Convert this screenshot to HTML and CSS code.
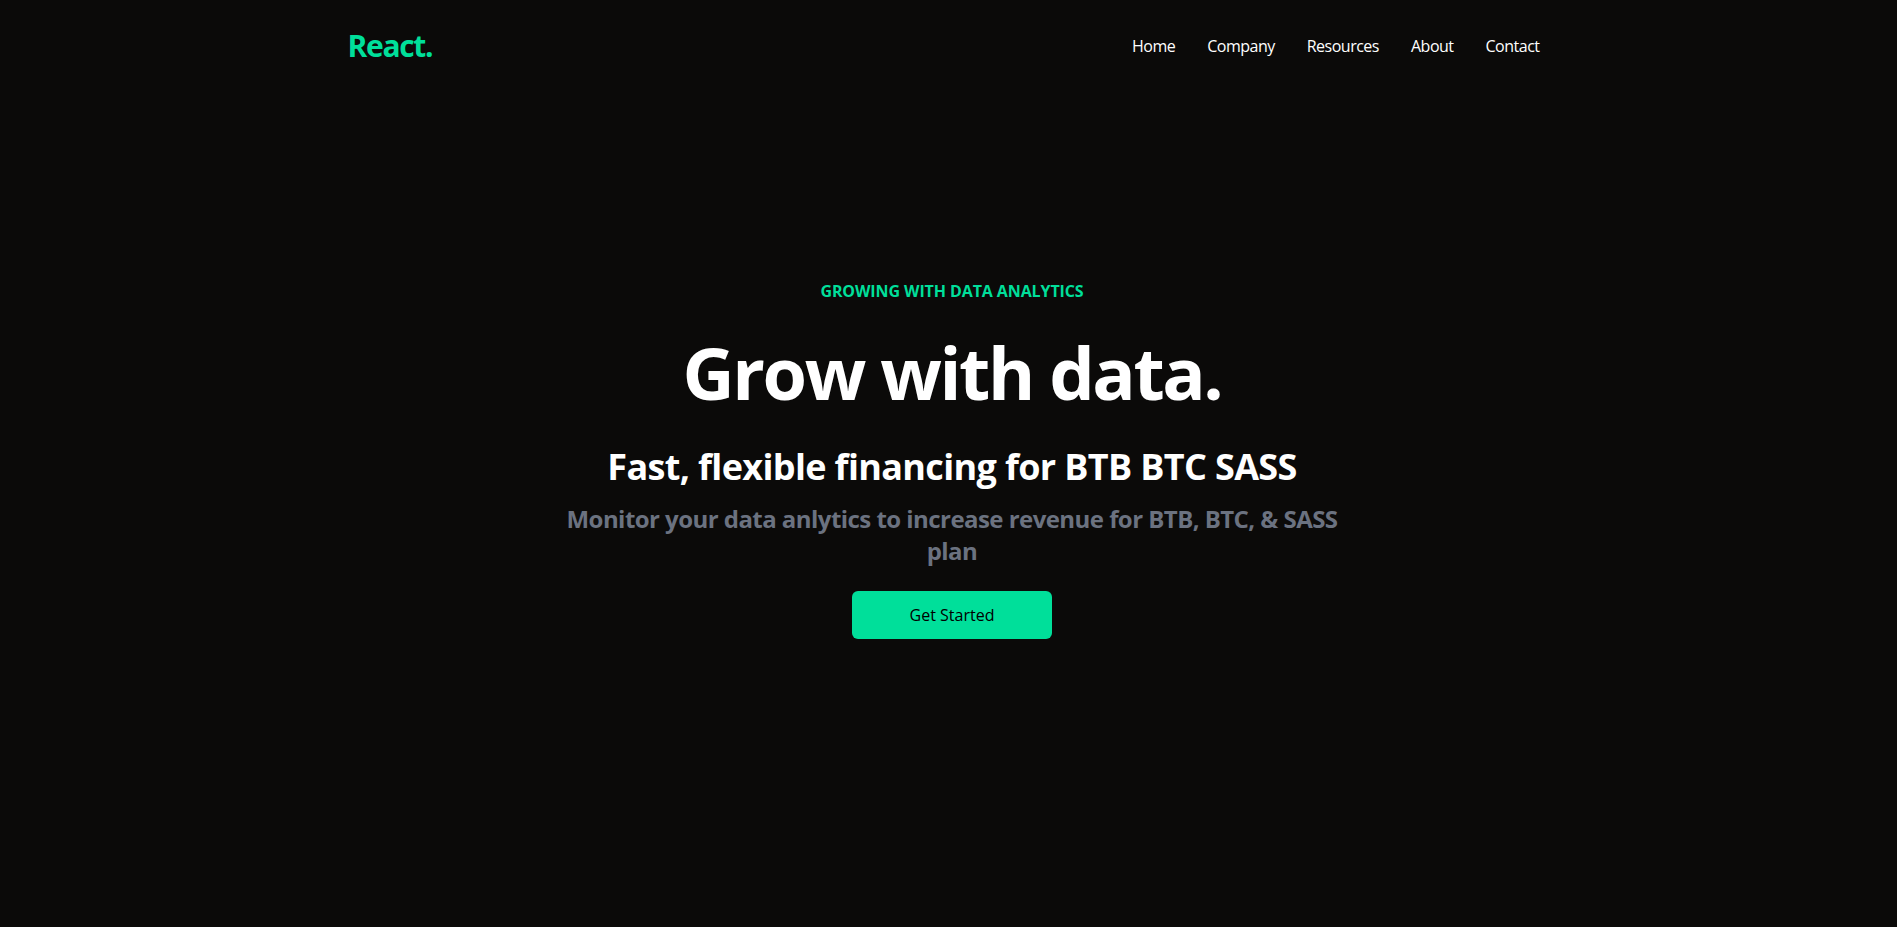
FILE: index.html
```html
<!DOCTYPE html>
<html lang="en">
<head>
<meta charset="utf-8">
<title>React.</title>
<link rel="stylesheet" href="styles.css">
</head>
<body>
<header class="navbar">
  <h1 class="logo">React.</h1>
  <ul class="nav-links">
    <li>Home</li>
    <li>Company</li>
    <li>Resources</li>
    <li>About</li>
    <li>Contact</li>
  </ul>
</header>
<section class="hero">
  <p class="eyebrow">GROWING WITH DATA ANALYTICS</p>
  <h1 class="title">Grow with data.</h1>
  <div class="sub-wrap">
    <p class="sub">Fast, flexible financing for BTB BTC SASS</p>
  </div>
  <p class="desc">Monitor your data anlytics to increase revenue for BTB, BTC, &amp; SASS plan</p>
  <button class="cta">Get Started</button>
</section>
</body>
</html>
```
FILE: styles.css
```css
* { box-sizing: border-box; }
html, body {
  margin: 0;
  padding: 0;
}
body {
  background: #0b0a09;
  color: #fff;
  font-family: "Open Sans", "Noto Sans", sans-serif;
  overflow: hidden;
  padding-left: 7px;
}
.navbar {
  display: flex;
  justify-content: space-between;
  align-items: center;
  height: 96px;
  max-width: 1240px;
  margin: 0 auto;
  padding: 0 16.5px 5px 15.5px;
  position: relative;
  z-index: 1;
}
.logo {
  margin: 0;
  font-size: 30px;
  line-height: 36px;
  font-weight: 700;
  color: #00df9a;
  letter-spacing: -1.3px;
}
.nav-links {
  display: flex;
  list-style: none;
  margin: 0;
  padding: 0;
}
.nav-links li {
  padding: 16px;
  font-size: 16px;
  line-height: 24px;
  letter-spacing: -0.5px;
}
.hero {
  max-width: 800px;
  width: 100%;
  height: 927px;
  margin: -96px auto 0;
  padding-top: 6px;
  text-align: center;
  display: flex;
  flex-direction: column;
  justify-content: center;
}
.eyebrow {
  margin: 0;
  padding: 8px;
  color: #00df9a;
  font-weight: 700;
  font-size: 16px;
  line-height: 24px;
  letter-spacing: -0.1px;
}
.title {
  margin: 0;
  padding: 25px 0 23px;
  font-size: 72px;
  line-height: 72px;
  font-weight: 700;
  letter-spacing: -2.4px;
}
.sub-wrap {
  display: flex;
  justify-content: center;
  align-items: center;
}
.sub {
  margin: 0;
  padding: 16px 0;
  font-size: 36px;
  line-height: 40px;
  font-weight: 700;
  letter-spacing: -0.65px;
}
.desc {
  margin: 0;
  font-size: 24px;
  line-height: 32px;
  font-weight: 700;
  color: #6b7280;
  letter-spacing: -0.55px;
}
.cta {
  display: block;
  width: 200px;
  margin: 24px auto;
  padding: 12px 0;
  border: none;
  border-radius: 6px;
  background: #00df9a;
  color: #000;
  font-family: inherit;
  font-size: 16px;
  line-height: 24px;
  font-weight: 500;
}
```
